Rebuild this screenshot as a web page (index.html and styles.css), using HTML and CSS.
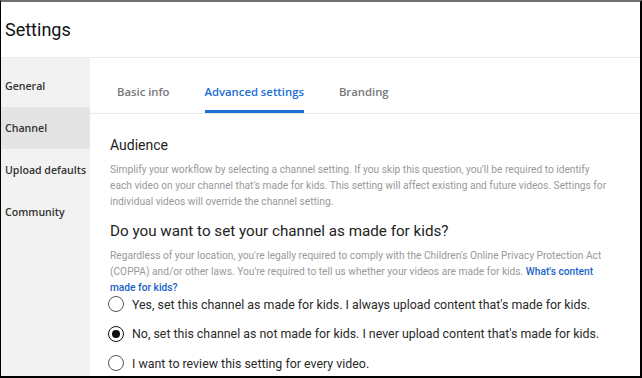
FILE: index.html
```html
<!DOCTYPE html>
<html lang="en">
<head>
    <meta charset="UTF-8">
    <title>Settings</title>
    <link rel="stylesheet" href="styles.css">
</head>
<body>
    <div class="frame">
        <div class="header">
            <h1>Settings</h1>
        </div>
        <div class="main">
            <div class="sidebar">
                <div class="side-item">General</div>
                <div class="side-item active">Channel</div>
                <div class="side-item">Upload defaults</div>
                <div class="side-item">Community</div>
            </div>
            <div class="content">
                <div class="tabs">
                    <div class="tab">Basic info</div>
                    <div class="tab active">Advanced settings</div>
                    <div class="tab">Branding</div>
                </div>
                <div class="panel">
                    <h2>Audience</h2>
                    <p class="desc">Simplify your workflow by selecting a channel setting. If you skip this question, you'll be required to identify each video on your channel that's made for kids. This setting will affect existing and future videos. Settings for individual videos will override the channel setting.</p>
                    <h3>Do you want to set your channel as made for kids?</h3>
                    <p class="desc">Regardless of your location, you're legally required to comply with the Children's Online Privacy Protection Act (COPPA) and/or other laws. You're required to tell us whether your videos are made for kids. <a href="#">What's content made for kids?</a></p>
                    <div class="options">
                        <label class="option"><span class="radio"></span>Yes, set this channel as made for kids. I always upload content that's made for kids.</label>
                        <label class="option"><span class="radio checked"></span>No, set this channel as not made for kids. I never upload content that's made for kids.</label>
                        <label class="option"><span class="radio"></span>I want to review this setting for every video.</label>
                    </div>
                </div>
            </div>
        </div>
    </div>
</body>
</html>
```

FILE: styles.css
```css
body {
    margin: 0;
    font-family: Roboto, "Liberation Sans", sans-serif;
    background: #fff;
}
.frame {
    width: 642px;
    height: 378px;
    box-sizing: border-box;
    border-top: 2px solid #707070;
    border-left: 1px solid #000;
    border-right: 2px solid #000;
    border-bottom: 2px solid #000;
    overflow: hidden;
    display: flex;
    flex-direction: column;
}
.header {
    height: 55px;
    border-bottom: 1px solid #ebebeb;
    display: flex;
    align-items: center;
    flex-shrink: 0;
}
.header h1 {
    margin: 0 0 0 4px;
    font-size: 18px;
    font-weight: 400;
    color: #111;
}
.main {
    display: flex;
    flex: 1;
}
.sidebar {
    width: 89px;
    flex-shrink: 0;
    background: #f2f2f2;
    padding-top: 7px;
}
.side-item {
    height: 42px;
    display: flex;
    align-items: center;
    padding-left: 4px;
    white-space: nowrap;
    font-family: "Open Sans", sans-serif;
    font-size: 10.6px;
    font-weight: 600;
    color: #333;
}
.side-item.active {
    background: #e4e4e4;
}
.content {
    flex: 1;
    min-width: 0;
}
.tabs {
    display: flex;
    gap: 35px;
    padding-left: 27px;
    height: 55px;
    border-bottom: 1px solid #e8e8e8;
}
.tab {
    display: flex;
    align-items: center;
    padding-top: 14px;
    font-family: "Open Sans", sans-serif;
    font-size: 11.3px;
    font-weight: 600;
    color: #777;
    border-bottom: 3px solid transparent;
}
.tab.active {
    color: #1a6ed8;
    border-bottom-color: #1a6ed8;
}
.panel {
    padding: 23px 0 0 20px;
    width: 500px;
}
.panel h2 {
    margin: 0 0 9px;
    font-size: 14px;
    font-weight: 400;
    color: #222;
}
.desc {
    margin: 0;
    font-size: 10.2px;
    line-height: 16px;
    color: #999;
}
.desc a {
    color: #1a62c9;
    text-decoration: none;
    font-weight: 500;
}
.panel h3 {
    margin: 12px 0 8px;
    font-size: 15.2px;
    font-weight: 400;
    color: #222;
    white-space: nowrap;
}
.options {
    display: flex;
    flex-direction: column;
    gap: 13.5px;
    margin-left: -2px;
}
.option {
    display: flex;
    align-items: center;
    height: 16px;
    font-size: 12.4px;
    color: #2a2a2a;
    white-space: nowrap;
}
.radio {
    width: 14px;
    height: 14px;
    border: 1.5px solid #555;
    border-radius: 50%;
    margin-right: 8px;
    flex-shrink: 0;
    display: flex;
    align-items: center;
    justify-content: center;
}
.radio.checked {
    border-color: #111;
}
.radio.checked::after {
    content: "";
    width: 8px;
    height: 8px;
    border-radius: 50%;
    background: #111;
}
```
